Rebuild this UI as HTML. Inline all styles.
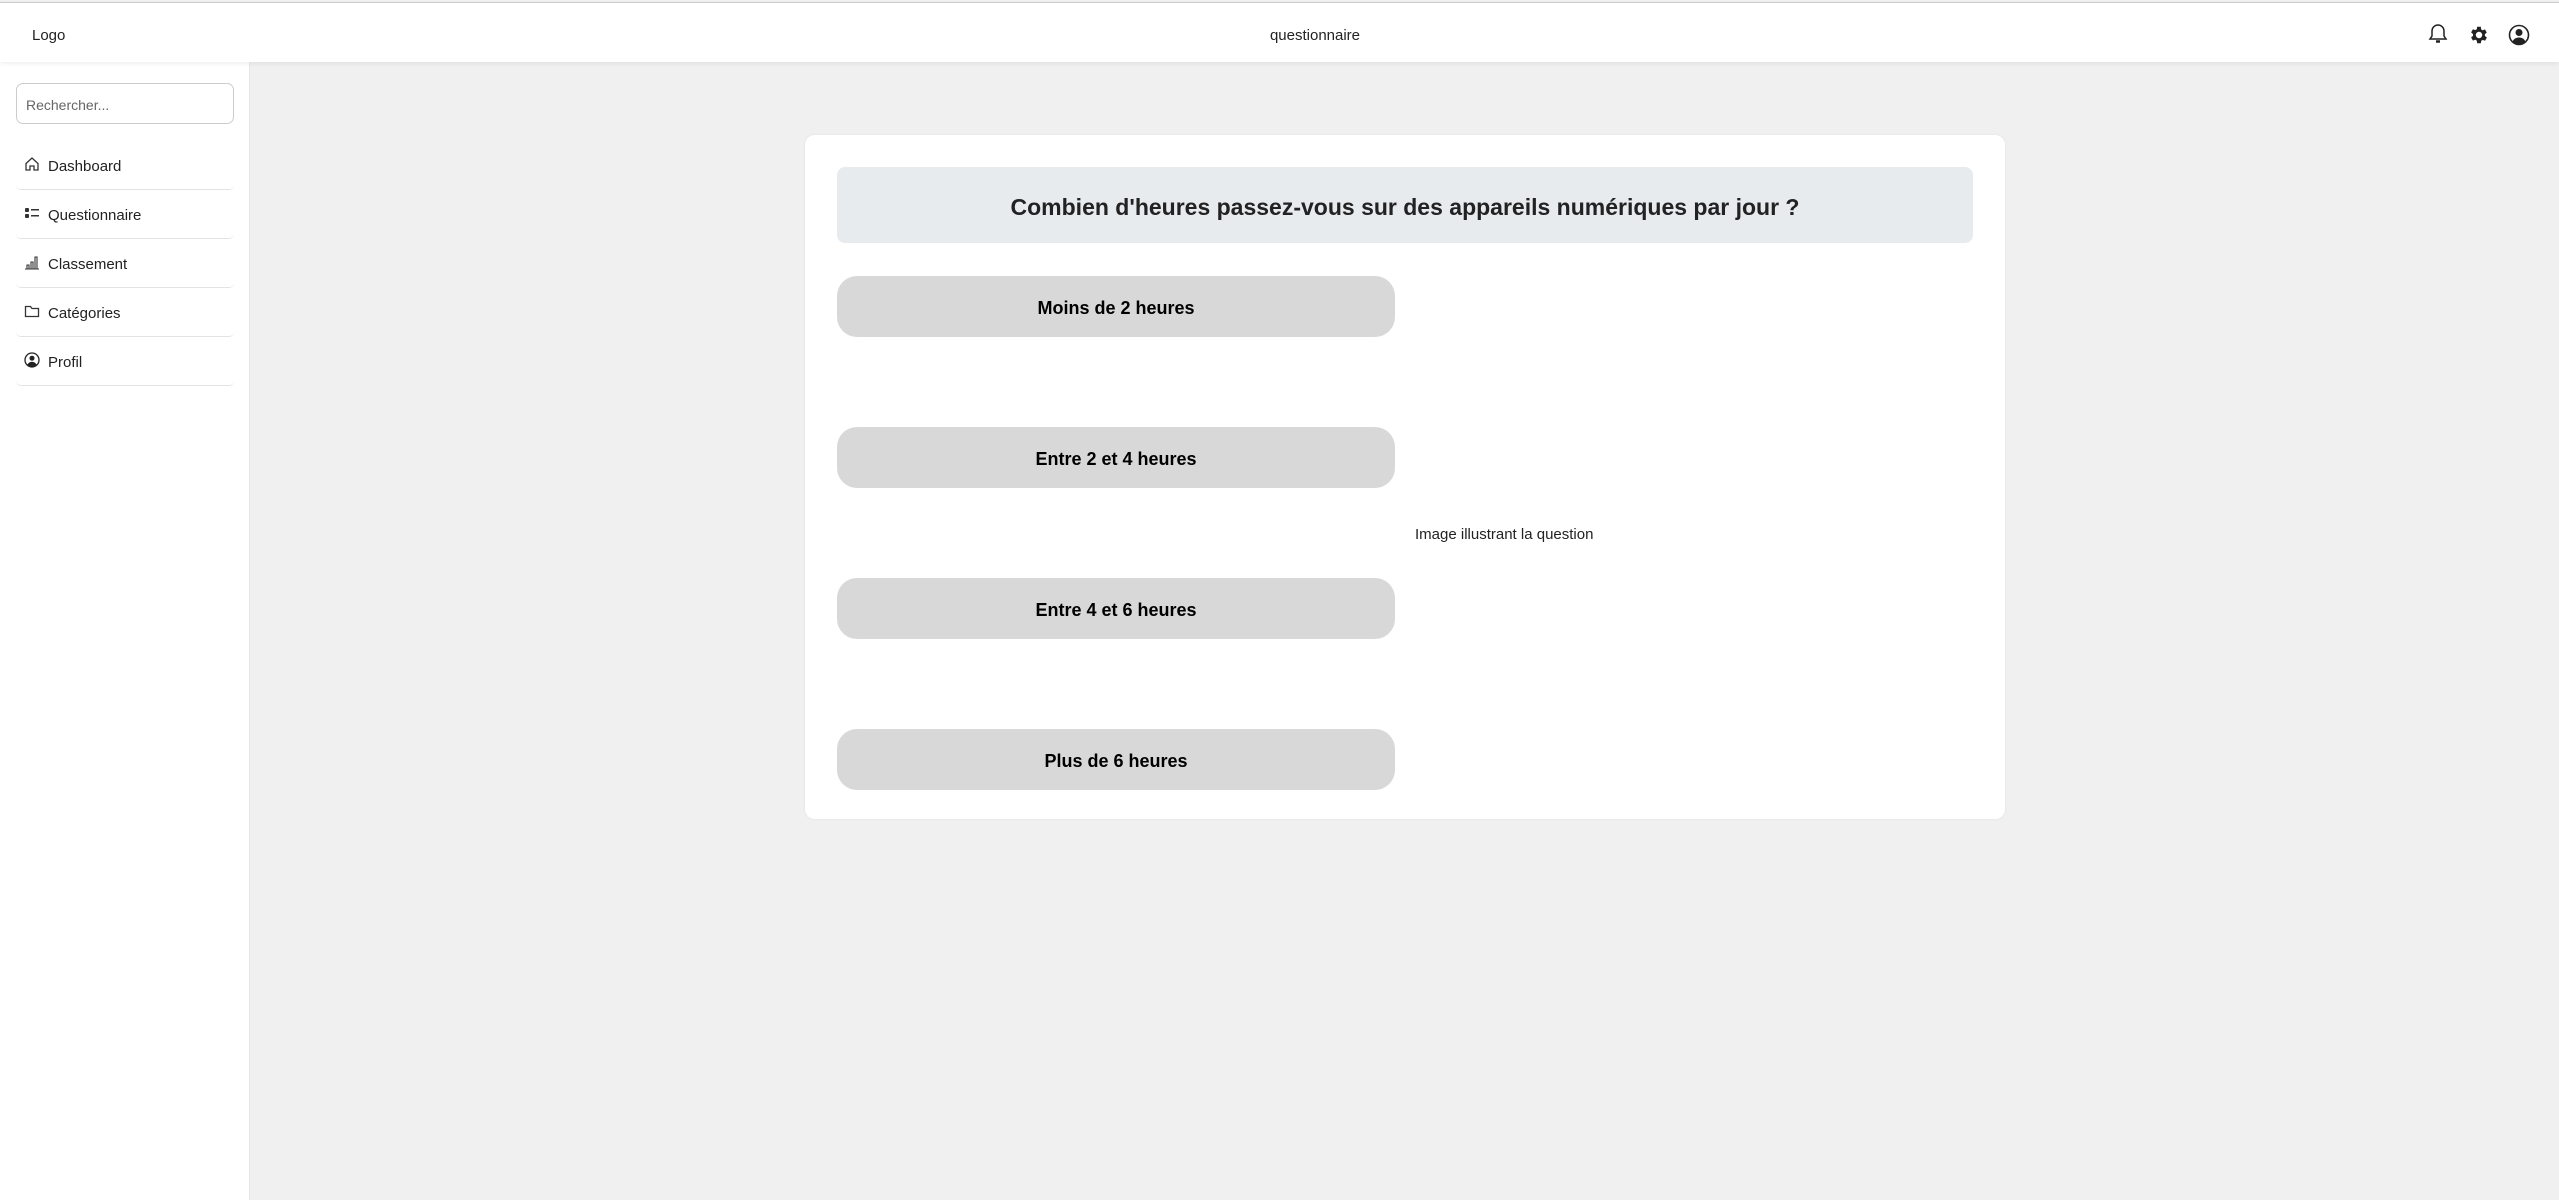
<!DOCTYPE html>
<html><head><meta charset="utf-8"><style>
*{box-sizing:border-box;margin:0;padding:0}
body{width:2559px;height:1200px;background:#f0f0f0;font-family:"Liberation Sans",sans-serif;color:#222;position:relative;overflow:hidden}
.hdr{position:absolute;left:0;top:2px;width:2559px;height:60px;background:#fff;border-top:1px solid #ccc;box-shadow:0 2px 4px rgba(0,0,0,.06);z-index:2}
.hdr .logo{position:absolute;left:32px;top:24px;font-size:15px}
.hdr .title{position:absolute;left:0;width:2630px;text-align:center;top:24px;font-size:15px}
.side{position:absolute;left:0;top:62px;width:250px;height:1138px;background:#fff;border-right:1px solid #e6e6e6}
.search{position:absolute;left:16px;top:21px;width:218px;height:41px;border:1px solid #ccc;border-radius:7px;padding:13px 9px;font-size:14px;color:#666}
.nav{position:absolute;left:16px;width:218px;height:49px;border-bottom:1px solid #e3e3e3;border-radius:0 0 5px 5px;font-size:15px}
.nav svg{position:absolute;left:8px;top:15px}
.nav span{position:absolute;left:32px;top:17px}
.card{position:absolute;left:805px;top:135px;width:1200px;height:684px;background:#fff;border-radius:10px;box-shadow:0 0 3px rgba(0,0,0,.06)}
.q{position:absolute;left:32px;top:32px;width:1136px;height:76px;background:#e8ebee;border-radius:8px;text-align:center;line-height:80px;font-weight:bold;font-size:23px;color:#222}
.b{position:absolute;left:32px;width:558px;height:61px;background:#d8d8d8;border-radius:20px;text-align:center;line-height:64px;font-weight:bold;font-size:18px;color:#000}
.img{position:absolute;left:610px;top:391px;font-size:15px;color:#222}
</style></head><body>
<div class="hdr"><div class="logo">Logo</div><div class="title">questionnaire</div>
<svg style="position:absolute;left:2428px;top:20px" width="20" height="22" viewBox="0 0 20 22" fill="none" stroke="#222" stroke-width="1.5"><path d="M10 2a6 6 0 0 0-6 6v5l-2 3h16l-2-3V8a6 6 0 0 0-6-6z"/><path d="M8 18.5h4" stroke-width="2.5"/></svg>
<svg style="position:absolute;left:2468px;top:21px" width="22" height="22" viewBox="0 0 24 24"><path fill="#222" d="M19.4 13a7.5 7.5 0 0 0 0-2l2.1-1.6-2-3.5-2.5 1a7.5 7.5 0 0 0-1.7-1L15 3h-4l-.4 2.7a7.5 7.5 0 0 0-1.7 1l-2.5-1-2 3.5L6.5 11a7.5 7.5 0 0 0 0 2l-2.1 1.6 2 3.5 2.5-1a7.5 7.5 0 0 0 1.7 1L11 21h4l.4-2.7a7.5 7.5 0 0 0 1.7-1l2.5 1 2-3.5zM13 15.5a3.5 3.5 0 1 1 0-7 3.5 3.5 0 0 1 0 7z" transform="translate(-1 0)"/></svg>
<svg style="position:absolute;left:2508px;top:21px" width="22" height="22" viewBox="0 0 22 22"><circle cx="11" cy="11" r="9.5" fill="none" stroke="#222" stroke-width="1.6"/><circle cx="11" cy="8.5" r="3.5" fill="#222"/><path d="M4.5 17.5c1.5-3 4-4 6.5-4s5 1 6.5 4a9 9 0 0 1-13 0z" fill="#222"/></svg>
</div>
<div class="side">
<div class="search">Rechercher...</div>
<div class="nav" style="top:79px"><svg width="16" height="16" viewBox="0 0 16 16" fill="none" stroke="#333" stroke-width="1.3"><path d="M2 7.5 8 2l6 5.5V14H10V10H6v4H2z"/></svg><span>Dashboard</span></div>
<div class="nav" style="top:128px"><svg width="16" height="16" viewBox="0 0 16 16" fill="#333"><rect x="1" y="3" width="4" height="4" rx="1"/><rect x="1" y="9" width="4" height="4" rx="1"/><rect x="7" y="4" width="8" height="1.5"/><rect x="7" y="10" width="8" height="1.5"/></svg><span>Questionnaire</span></div>
<div class="nav" style="top:177px"><svg width="16" height="16" viewBox="0 0 16 16" fill="none" stroke="#333" stroke-width="1.1"><path d="M1 15h14M3 11h2v4H3zM7 8h2v7H7zM11 3h2v12h-2z"/></svg><span>Classement</span></div>
<div class="nav" style="top:226px"><svg width="16" height="16" viewBox="0 0 16 16" fill="none" stroke="#333" stroke-width="1.3"><path d="M1.5 3.5h5l1.5 2h6.5v8h-13z"/></svg><span>Catégories</span></div>
<div class="nav" style="top:275px"><svg width="16" height="16" viewBox="0 0 16 16"><circle cx="8" cy="8" r="7" fill="none" stroke="#222" stroke-width="1.3"/><circle cx="8" cy="6.2" r="2.5" fill="#222"/><path d="M3.3 12.8c1-2 2.8-3 4.7-3s3.7 1 4.7 3a7 7 0 0 1-9.4 0z" fill="#222"/></svg><span>Profil</span></div>
</div>
<div class="card">
<div class="q">Combien d'heures passez-vous sur des appareils numériques par jour ?</div>
<div class="b" style="top:141px">Moins de 2 heures</div>
<div class="b" style="top:292px">Entre 2 et 4 heures</div>
<div class="b" style="top:443px">Entre 4 et 6 heures</div>
<div class="b" style="top:594px">Plus de 6 heures</div>
<div class="img">Image illustrant la question</div>
</div>
</body></html>
